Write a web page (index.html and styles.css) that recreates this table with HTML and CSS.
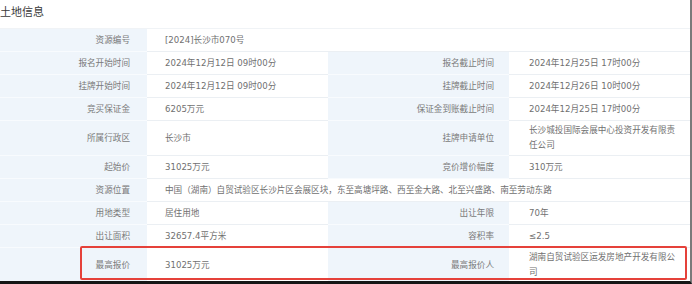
FILE: index.html
```html
<!DOCTYPE html>
<html lang="zh-CN">
<head>
<meta charset="utf-8">
<title>土地信息</title>
<link rel="stylesheet" href="styles.css">
</head>
<body>
<div class="page">
  <div class="title">土地信息</div>
  <div class="table">
    <div class="cell label">资源编号</div>
    <div class="cell value span3">[2024]长沙市070号</div>

    <div class="cell label">报名开始时间</div>
    <div class="cell value">2024年12月12日 09时00分</div>
    <div class="cell label label2">报名截止时间</div>
    <div class="cell value value2">2024年12月25日 17时00分</div>

    <div class="cell label">挂牌开始时间</div>
    <div class="cell value">2024年12月12日 09时00分</div>
    <div class="cell label label2">挂牌截止时间</div>
    <div class="cell value value2">2024年12月26日 10时00分</div>

    <div class="cell label">竞买保证金</div>
    <div class="cell value">6205万元</div>
    <div class="cell label label2">保证金到账截止时间</div>
    <div class="cell value value2">2024年12月25日 17时00分</div>

    <div class="cell label">所属行政区</div>
    <div class="cell value">长沙市</div>
    <div class="cell label label2">挂牌申请单位</div>
    <div class="cell value value2">长沙城投国际会展中心投资开发有限责任公司</div>

    <div class="cell label">起始价</div>
    <div class="cell value">31025万元</div>
    <div class="cell label label2">竞价增价幅度</div>
    <div class="cell value value2">310万元</div>

    <div class="cell label">资源位置</div>
    <div class="cell value span3">中国（湖南）自贸试验区长沙片区会展区块，东至高塘坪路、西至金大路、北至兴盛路、南至劳动东路</div>

    <div class="cell label">用地类型</div>
    <div class="cell value">居住用地</div>
    <div class="cell label label2">出让年限</div>
    <div class="cell value value2">70年</div>

    <div class="cell label">出让面积</div>
    <div class="cell value">32657.4平方米</div>
    <div class="cell label label2">容积率</div>
    <div class="cell value value2">≤2.5</div>

    <div class="cell label">最高报价</div>
    <div class="cell value">31025万元</div>
    <div class="cell label label2">最高报价人</div>
    <div class="cell value value2">湖南自贸试验区运发房地产开发有限公司</div>
  </div>
  <div class="highlight"></div>
</div>
</body>
</html>
```
FILE: styles.css
```css
html, body {
  margin: 0;
  padding: 0;
  background: #ffffff;
}

.page {
  position: relative;
  width: 690px;
  height: 281px;
  border-right: 2px solid #7a7a7a;
  border-bottom: 3px solid #151515;
  overflow: hidden;
  font-family: "DejaVu Sans", "Noto Sans CJK SC", sans-serif;
  font-size: 8.6px;
  color: #777777;
}

.title {
  height: 28px;
  line-height: 22px;
  font-size: 11px;
  color: #3a3a3a;
  font-family: "Noto Sans CJK SC", sans-serif;
  border-bottom: 1px solid #f0f3f6;
}

.table {
  display: grid;
  grid-template-columns: 147px 181px 181px 181px;
}

.cell {
  box-sizing: border-box;
  min-height: 23px;
  padding: 2px 0;
  line-height: 15px;
  display: flex;
  align-items: center;
  border-bottom: 1px solid #ebeff3;
}

.label {
  justify-content: flex-end;
  padding-right: 17px;
  background: #eff5fb;
  color: #7a7a7a;
  border-bottom-color: #f8fbfe;
}

.label2 {
  padding-right: 15px;
}

.value {
  padding-left: 18px;
  padding-right: 8px;
  color: #707070;
  background: #ffffff;
}

.value2 {
  padding-left: 20px;
  padding-right: 10px;
}

.span3 {
  grid-column: span 3;
}

.highlight {
  position: absolute;
  left: 80px;
  top: 246px;
  width: 607px;
  height: 34px;
  box-sizing: border-box;
  border: 2px solid #e5413a;
  border-radius: 2px;
}
```
